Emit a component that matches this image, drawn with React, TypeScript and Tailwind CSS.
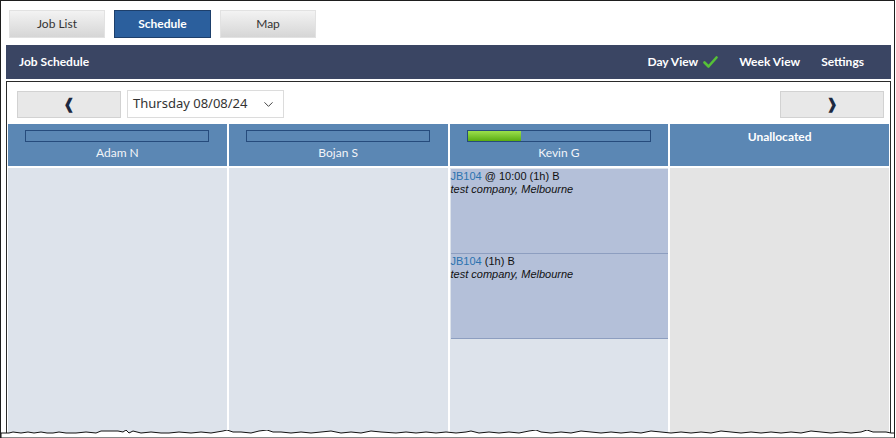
import { ChevronDown } from "lucide-react";

const lato = { fontFamily: "Lato, 'Open Sans', sans-serif" };

interface Tech {
  name: string;
  load?: number;
  unallocated?: boolean;
}

const techs: Tech[] = [
  { name: "Adam N", load: 0 },
  { name: "Bojan S", load: 0 },
  { name: "Kevin G", load: 29 },
  { name: "Unallocated", unallocated: true },
];

const TabButton = ({ label, active }: { label: string; active?: boolean }) => (
  <div
    className={
      active
        ? "w-[97px] h-[28px] flex items-center justify-center bg-[#2b5f9d] border border-[#1d3f6b] text-white text-[12px] font-bold"
        : "w-[96px] h-[28px] flex items-center justify-center bg-gradient-to-b from-[#f3f3f3] to-[#d6d6d6] border border-[#e2e2e2] text-[#333] text-[12px]"
    }
  >
    {label}
  </div>
);

const JobBlock = ({ time }: { time?: string }) => (
  <div
    className="ml-[1px] h-[85px] bg-[#b4c0d9] border-b border-[#8d9ec0] text-[11px] leading-[13px] text-[#111] pt-[1px]"
    style={{ fontFamily: "'Liberation Sans', Arial, sans-serif" }}
  >
    <div>
      <span className="text-[#2b73b0]">JB104</span>
      {time ? ` @ ${time} (1h) B` : " (1h) B"}
    </div>
    <div className="italic">test company, Melbourne</div>
  </div>
);

const Column = ({ tech }: { tech: Tech }) => (
  <div className="flex flex-col">
    <div className="h-[42px] bg-[#5b87b4] flex flex-col items-center text-white text-[12px]">
      {tech.unallocated ? (
        <div className="pt-[4px] font-bold">{tech.name}</div>
      ) : (
        <>
          <div className="mt-[6px] w-[184px] h-[12px] border border-[#264b7c] bg-[#5b87b4]">
            {tech.load ? (
              <div
                className="h-full bg-gradient-to-b from-[#9be04a] to-[#5aad0c]"
                style={{ width: `${tech.load}%` }}
              />
            ) : null}
          </div>
          <div className="mt-[2px] text-[#f2f4f8]">{tech.name}</div>
        </>
      )}
    </div>
    <div
      className={
        tech.unallocated
          ? "mt-[2px] h-[300px] bg-[#e4e4e4]"
          : "mt-[2px] h-[300px] bg-[#dde3eb] pt-[1px]"
      }
    >
      {tech.load ? (
        <>
          <JobBlock time="10:00" />
          <JobBlock />
        </>
      ) : null}
    </div>
  </div>
);

export default function App() {
  return (
    <div
      className="relative w-[895px] h-[438px] overflow-hidden bg-white border-l border-t border-r border-[#1e1e1e]"
      style={lato}
    >
      <div className="flex gap-[9px] pl-[8px] pt-[9px]">
        <TabButton label="Job List" />
        <TabButton label="Schedule" active />
        <TabButton label="Map" />
      </div>

      <div className="ml-[5px] mt-[7px] w-[885px] h-[34px] bg-[#3a4563] flex items-center justify-between pl-[13px] pr-[27px] text-white text-[12px] font-bold">
        <div>Job Schedule</div>
        <div className="flex items-center gap-[21px]">
          <div className="flex items-center gap-[5px]">
            <span>Day View</span>
            <svg width="15" height="12" viewBox="0 0 15 12">
              <path d="M1.5 6.5 L5.5 10.5 L13.5 1.5" fill="none" stroke="#56c137" strokeWidth="2.6" strokeLinecap="round" strokeLinejoin="round" />
            </svg>
          </div>
          <span>Week View</span>
          <span>Settings</span>
        </div>
      </div>

      <div className="ml-[5px] mt-[2px] w-[885px] h-[400px] border border-[#2a2a2a]">
        <div className="flex items-center justify-between pl-[10px] pr-[6px] pt-[8px]">
          <div className="flex items-center gap-[6px]">
            <div
              className="w-[104px] h-[27px] mt-[1px] bg-[#e8e8e8] border border-[#d2d2d2] flex items-center justify-center text-[#1c2840] text-[15px]"
              style={{ fontFamily: "'DejaVu Sans', sans-serif" }}
            >
              ❰
            </div>
            <div
              className="w-[157px] h-[28px] bg-white border border-[#dcdcdc] flex items-center justify-between pl-[5px] pr-[7px] text-[13px] text-[#333]"
              style={{ fontFamily: "'Noto Sans', sans-serif" }}
            >
              <span>Thursday 08/08/24</span>
              <ChevronDown size={15} strokeWidth={1.6} className="text-[#444]" />
            </div>
          </div>
          <div
            className="w-[104px] h-[27px] mt-[1px] bg-[#e8e8e8] border border-[#d2d2d2] flex items-center justify-center text-[#1c2840] text-[15px]"
            style={{ fontFamily: "'DejaVu Sans', sans-serif" }}
          >
            ❱
          </div>
        </div>

        <div className="grid grid-cols-4 gap-[2px] px-[1px] pt-[6px]">
          {techs.map((t) => (
            <Column key={t.name} tech={t} />
          ))}
        </div>
      </div>

      <svg className="absolute left-0 bottom-0" width="895" height="8" viewBox="0 0 895 8">
        <path
          d="M0 3 L8 3 L12 2 L20 3 L27 2 L33 3 L40 2 L46 3 L52 3 L58 2 L65 3 L75 3 L85 2 L95 3 L100 1 L117 1 L122 2 L125 0 L128 3 L132 1 L140 3 L150 2 L160 3 L168 3 L178 2 L190 3 L200 2 L210 3 L222 1 L226 0 L232 2 L240 2 L250 3 L258 1 L266 0 L272 2 L280 2 L290 3 L300 2 L310 3 L320 2 L330 1 L340 3 L350 2 L360 3 L370 1 L380 2 L395 3 L405 2 L415 3 L425 2 L435 3 L445 2 L455 3 L465 2 L470 1 L478 3 L488 2 L498 3 L508 2 L518 3 L528 1 L535 0 L540 2 L550 3 L560 2 L570 3 L580 1 L590 2 L600 3 L610 2 L620 3 L630 2 L640 3 L650 1 L660 2 L670 3 L680 2 L690 3 L700 2 L710 3 L720 1 L730 2 L740 3 L750 2 L760 3 L770 2 L780 3 L790 2 L800 3 L810 1 L820 2 L830 3 L840 2 L850 3 L860 2 L866 0 L872 2 L885 2 L890 3 L895 3 L895 8 L0 8 Z"
          fill="white"
          stroke="#111"
          strokeWidth="1"
        />
      </svg>
    </div>
  );
}
